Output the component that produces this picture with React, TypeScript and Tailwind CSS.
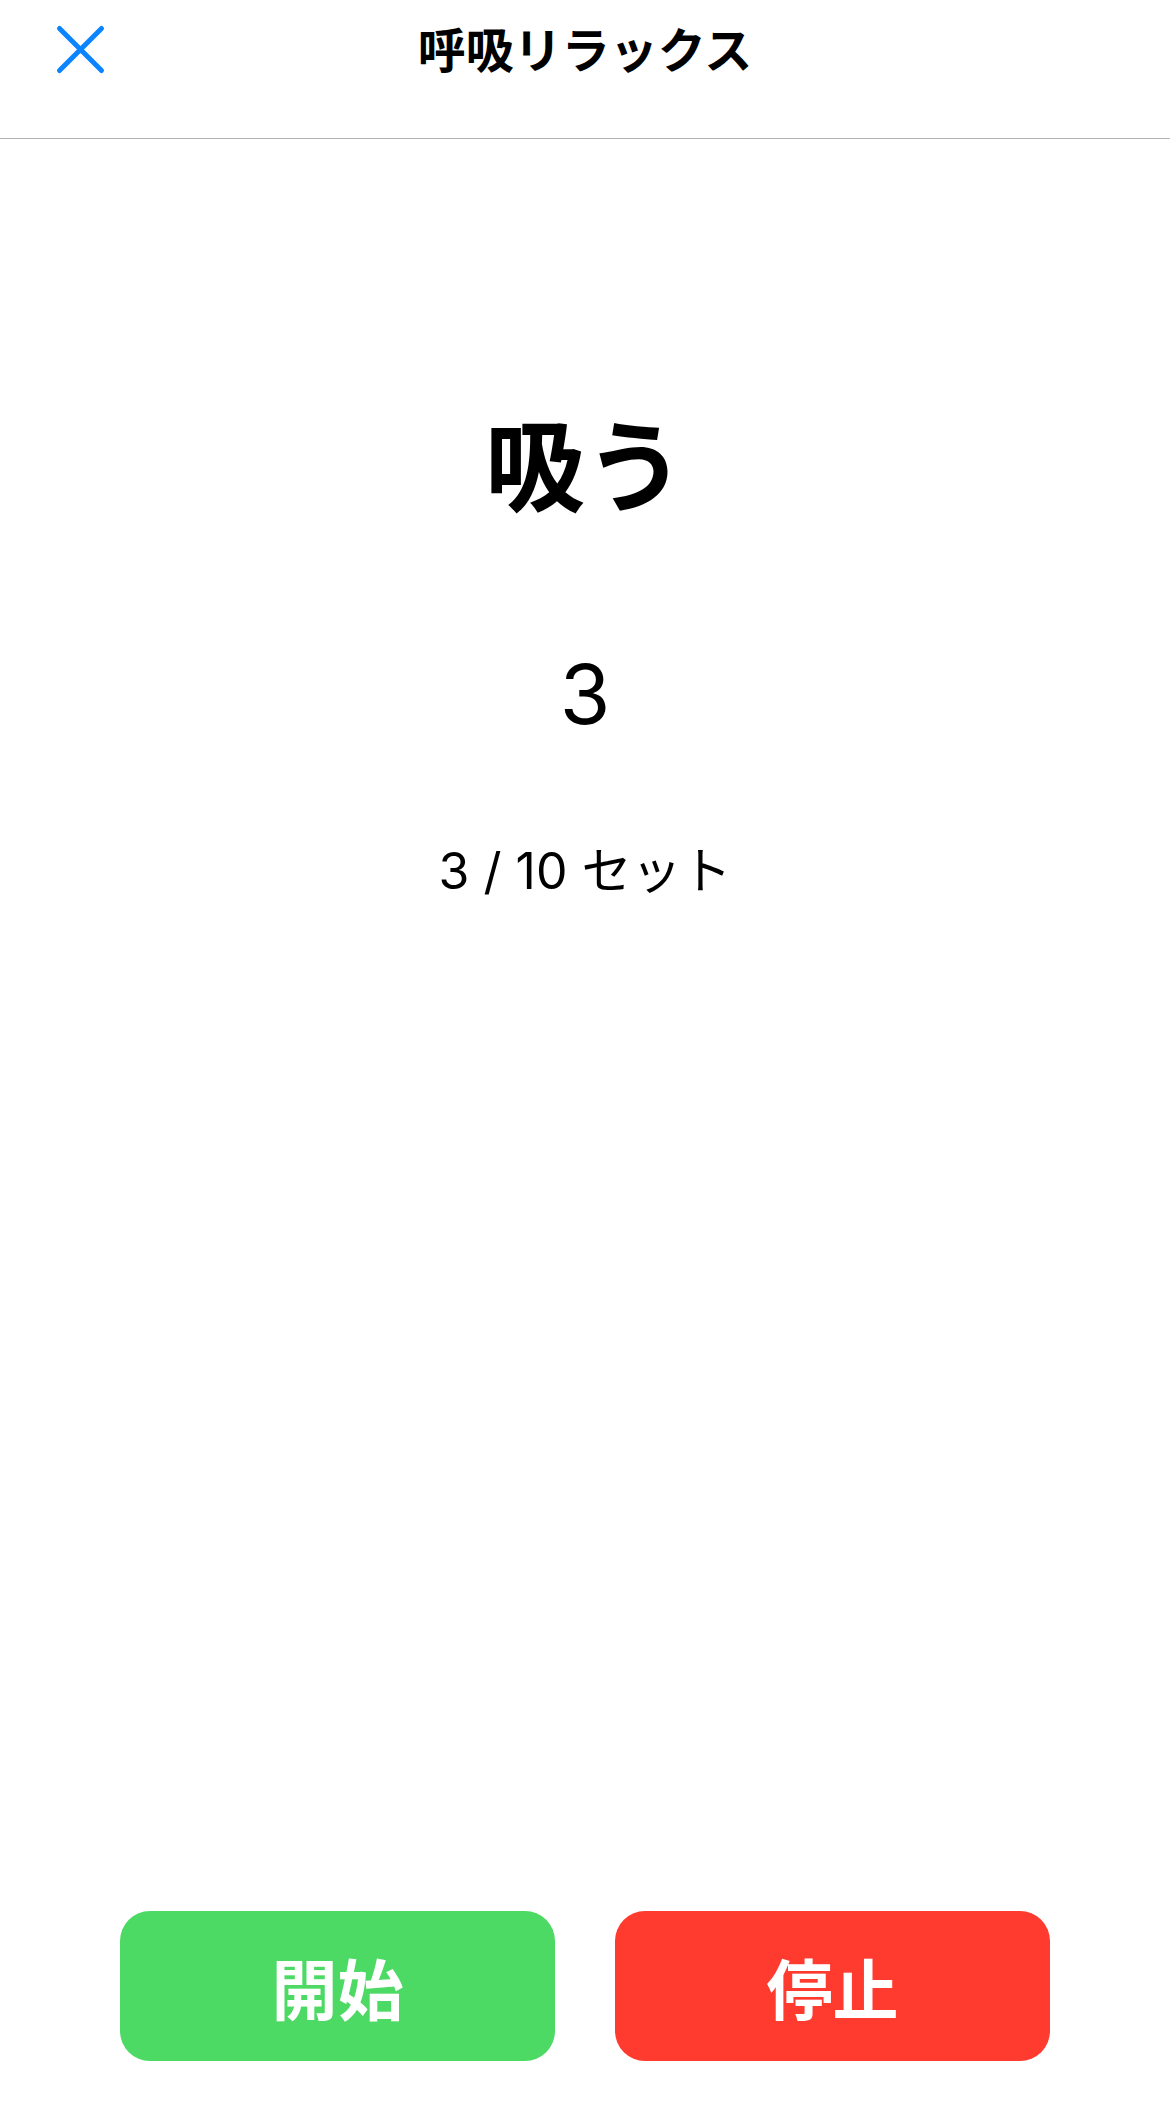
import React from "react";

const jp = "font-['Noto_Sans_CJK_JP',sans-serif]";
const num = "font-['Inter','Noto_Sans_CJK_JP',sans-serif]";

function CloseIcon() {
    return (
        <svg width="52" height="52" viewBox="0 0 52 52" fill="none">
            <path
                d="M4.5 4.5L46.5 46.5M46.5 4.5L4.5 46.5"
                stroke="#0a84ff"
                strokeWidth="5"
                strokeLinecap="round"
            />
        </svg>
    );
}

export default function App() {
    const phase = "吸う";
    const count = 3;
    const set = 3;
    const totalSets = 10;

    return (
        <div className="flex flex-col h-[2109px] bg-white text-black">
            {/* Header */}
            <header className="h-[139px] border-b border-[#b3b3b3] shrink-0">
                <div className="grid grid-cols-[1fr_auto_1fr] items-center h-[100px]">
                    <button className="justify-self-start pl-[55px] flex items-center">
                        <CloseIcon />
                    </button>
                    <h1 className={`${jp} -mt-[6px] text-[48px] leading-none font-bold`}>呼吸リラックス</h1>
                    <div />
                </div>
            </header>

            {/* Breathing state */}
            <main className="flex-1 flex flex-col items-center">
                <p className={`${jp} mt-[272px] text-[100px] leading-none font-bold`}>{phase}</p>
                <p className={`${num} mt-[143px] text-[82px] leading-none font-normal`}>{count}</p>
                <p className={`${num} mt-[110px] text-[50px] leading-none font-normal`}>
                    {set} / {totalSets} セット
                </p>
            </main>

            {/* Controls */}
            <div className="flex justify-center gap-[60px] pb-[48px] shrink-0">
                <button className={`${jp} w-[435px] h-[150px] rounded-[30px] bg-[#4cd964] text-white text-[66px] leading-none font-bold`}>
                    開始
                </button>
                <button className={`${jp} w-[435px] h-[150px] rounded-[30px] bg-[#ff3b30] text-white text-[66px] leading-none font-bold`}>
                    停止
                </button>
            </div>
        </div>
    );
}
